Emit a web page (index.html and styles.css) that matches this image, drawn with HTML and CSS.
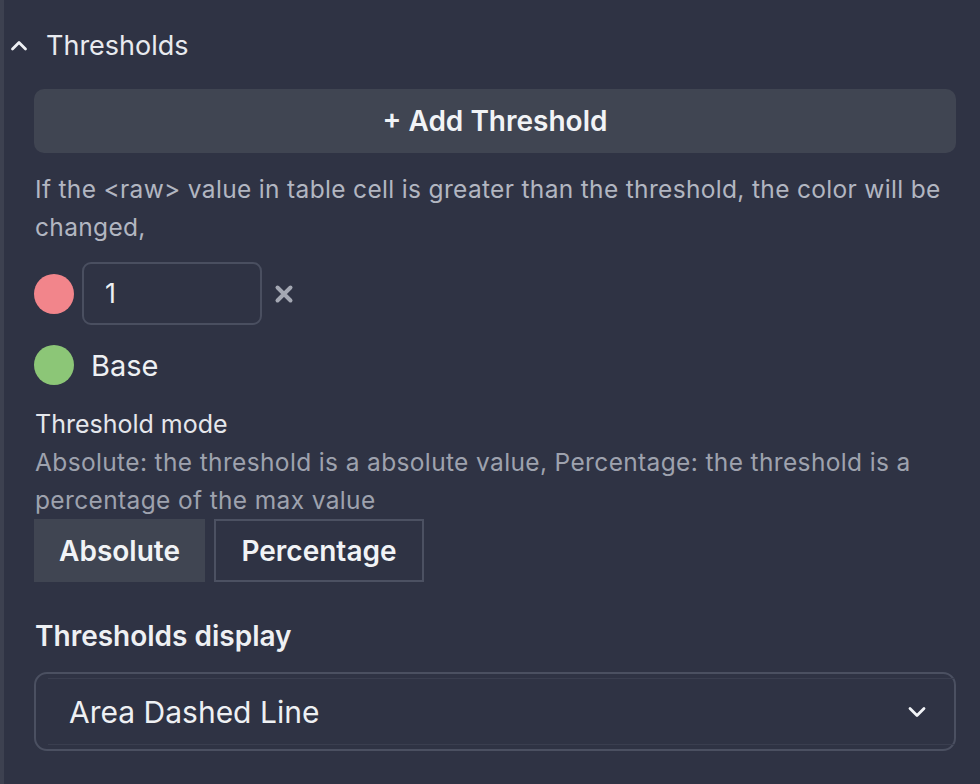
FILE: index.html
```html
<!DOCTYPE html>
<html>
<head>
<meta charset="utf-8">
<link rel="stylesheet" href="styles.css">
</head>
<body>
<div class="panel">
  <div class="section-head">
    <svg class="chev-up" width="20" height="12" viewBox="0 0 20 12"><path d="M3.5 10 L10 3.5 L16.5 10" fill="none" stroke="#eef0f4" stroke-width="2.8" stroke-linecap="round" stroke-linejoin="round"/></svg>
    <span class="section-title">Thresholds</span>
  </div>
  <div class="content">
    <button class="add-btn">+ Add Threshold</button>
    <p class="desc">If the &lt;raw&gt; value in table cell is greater than the threshold, the color will be changed,</p>
    <div class="row">
      <span class="dot dot-red"></span>
      <div class="num-input">1</div>
      <svg class="remove" width="20" height="20" viewBox="0 0 20 20"><path d="M3.5 3.5 L16.5 16.5 M16.5 3.5 L3.5 16.5" stroke="#a4a8b3" stroke-width="4" stroke-linecap="round"/></svg>
    </div>
    <div class="row base-row">
      <span class="dot dot-green"></span>
      <span class="base-label">Base</span>
    </div>
    <div class="mode-label">Threshold mode</div>
    <p class="mode-desc">Absolute: the threshold is a absolute value, Percentage: the threshold is a percentage of the max value</p>
    <div class="seg">
      <button class="seg-btn active">Absolute</button>
      <button class="seg-btn">Percentage</button>
    </div>
    <div class="display-label">Thresholds display</div>
    <div class="select">
      <div class="select-inner">
        <span class="select-value">Area Dashed Line</span>
        <svg class="chev-down" width="22" height="14" viewBox="0 0 22 14"><path d="M4 3.5 L11 10.5 L18 3.5" fill="none" stroke="#f2f4f7" stroke-width="2.8" stroke-linecap="round" stroke-linejoin="round"/></svg>
      </div>
    </div>
  </div>
</div>
</body>
</html>
```

FILE: styles.css
```css
html, body {
  margin: 0;
  padding: 0;
  background: #2f3344;
}
body {
  font-family: Inter, "Noto Sans", sans-serif;
  width: 980px;
  height: 784px;
  overflow: hidden;
}
.panel {
  box-sizing: border-box;
  height: 784px;
  border-left: 4px solid #3d4150;
  padding-top: 27px;
}
.section-head {
  display: flex;
  align-items: center;
  height: 36px;
  padding-left: 5px;
}
.chev-up {
  display: block;
  margin-right: 17px;
}
.section-title {
  font-size: 27px;
  color: #e8eaef;
}
.content {
  padding: 26px 24px 0 30px;
  display: flex;
  flex-direction: column;
  align-items: flex-start;
}
button {
  font-family: inherit;
  border: none;
  margin: 0;
  cursor: pointer;
}
.add-btn {
  width: 922px;
  height: 64px;
  border-radius: 10px;
  background: #404552;
  color: #f1f3f6;
  font-size: 28px;
  font-weight: 600;
}
.desc {
  margin: 17px 0 0 1px;
  font-size: 24.5px;
  letter-spacing: 0.33px;
  line-height: 38px;
  color: #b2b6c1;
  width: 920px;
}
.row {
  display: flex;
  align-items: center;
  margin-top: 16px;
}
.dot {
  width: 40px;
  height: 40px;
  border-radius: 50%;
  flex: none;
}
.dot-red { background: #f2858b; }
.dot-green { background: #8cc677; }
.num-input {
  box-sizing: border-box;
  width: 180px;
  height: 63px;
  margin-left: 8px;
  border: 2px solid #4a4f60;
  border-radius: 9px;
  display: flex;
  align-items: center;
  padding-left: 21px;
  font-size: 27px;
  color: #eef0f3;
}
.remove {
  display: block;
  margin-left: 12px;
}
.base-row {
  margin-top: 20px;
}
.base-label {
  margin-left: 17px;
  font-size: 29px;
  color: #eef0f3;
}
.mode-label {
  margin-top: 20px;
  font-size: 25px;
  line-height: 38px;
  color: #e5e7ec;
  margin-left: 1px;
}
.mode-desc {
  margin: 0 0 0 1px;
  font-size: 24.5px;
  letter-spacing: 0.36px;
  line-height: 38px;
  color: #9ea2ae;
  width: 920px;
}
.seg {
  display: flex;
  gap: 9px;
  margin-top: 0;
}
.seg-btn {
  box-sizing: border-box;
  height: 63px;
  padding: 0;
  font-size: 28px;
  font-weight: 600;
  color: #f1f3f6;
  background: transparent;
  border: 2px solid #4c5162;
}
.seg-btn.active {
  background: #404552;
  border-color: #404552;
  width: 171px;
}
.seg-btn:not(.active) {
  width: 210px;
}
.display-label {
  margin-top: 36px;
  font-size: 28px;
  line-height: 36px;
  font-weight: 600;
  color: #eef0f3;
  margin-left: 1px;
}
.select {
  box-sizing: border-box;
  margin-top: 18px;
  width: 922px;
  height: 79px;
  border: 2px solid #4b5061;
  border-radius: 13px;
  padding: 4px 0;
}
.select-inner {
  box-sizing: border-box;
  height: 100%;
  margin-left: 12px;
  border-top: 1px solid #3a3e4f;
  border-bottom: 1px solid #3a3e4f;
  display: flex;
  align-items: center;
  justify-content: space-between;
  padding: 0 26px 0 21px;
}
.select-value {
  font-size: 30px;
  color: #eef0f3;
}
.chev-down {
  display: block;
}
```
